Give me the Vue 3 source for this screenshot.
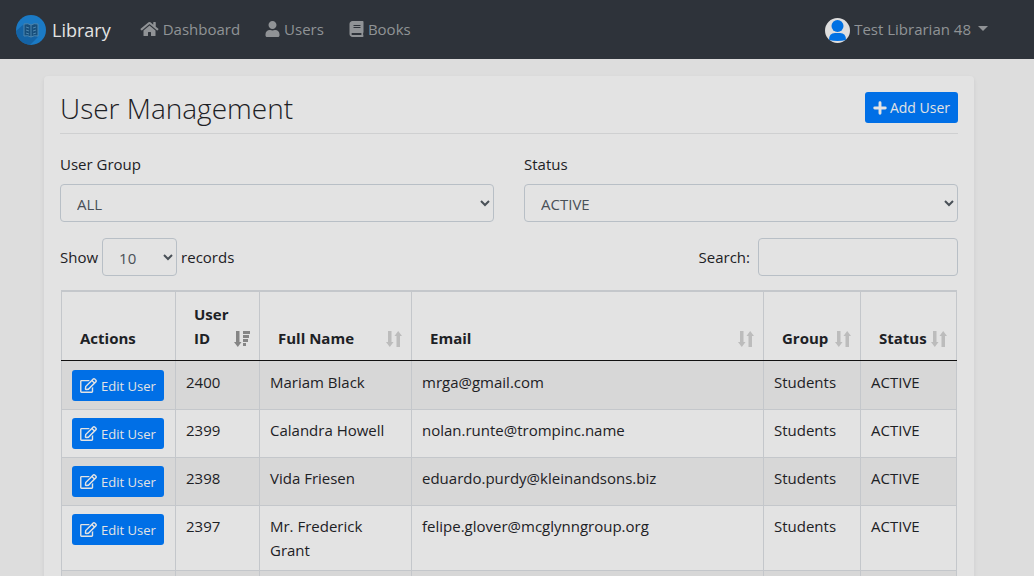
<script setup>
import { ref } from 'vue'

const group = ref('ALL')
const status = ref('ACTIVE')
const pageSize = ref('10')
const search = ref('')

const links = [
  {
    label: 'Dashboard', box: '0 0 576 512', wide: true,
    path: 'M280.4 148.3 96 300.1V464a16 16 0 0 0 16 16l112-.3a16 16 0 0 0 16-16V368a16 16 0 0 1 16-16h64a16 16 0 0 1 16 16v95.6a16 16 0 0 0 16 16.1L464 480a16 16 0 0 0 16-16V300L295.7 148.3a12.2 12.2 0 0 0-15.3 0zM571.6 251.5 488 182.6V44.1a12 12 0 0 0-12-12h-56a12 12 0 0 0-12 12v72.6L318.5 43a48 48 0 0 0-61 0L4.3 251.5a12 12 0 0 0-1.6 16.9l25.5 31a12 12 0 0 0 16.9 1.6l235.3-193.7a12.2 12.2 0 0 1 15.3 0L530.9 301a12 12 0 0 0 16.9-1.6l25.5-31a12 12 0 0 0-1.7-16.9z'
  },
  {
    label: 'Users', box: '0 0 448 512',
    path: 'M224 256c70.7 0 128-57.3 128-128S294.7 0 224 0 96 57.3 96 128s57.3 128 128 128zm89.6 32h-16.7c-22.2 10.2-46.9 16-72.9 16s-50.6-5.8-72.9-16h-16.7C60.2 288 0 348.2 0 422.4V464c0 26.5 21.5 48 48 48h352c26.5 0 48-21.5 48-48v-41.6c0-74.2-60.2-134.4-134.4-134.4z'
  },
  {
    label: 'Books', box: '0 0 448 512',
    path: 'M448 360V24c0-13.3-10.7-24-24-24H96C43 0 0 43 0 96v320c0 53 43 96 96 96h328c13.3 0 24-10.7 24-24v-16c0-7.5-3.5-14.3-8.9-18.7-4.2-15.4-4.2-59.3 0-74.7 5.4-4.3 8.9-11.1 8.9-18.6zM128 134c0-3.3 2.7-6 6-6h212c3.300 0 6 2.700 6 6v20c0 3.300-2.700 6-6 6H134c-3.300 0-6-2.700-6-6v-20zm0 64c0-3.300 2.700-6 6-6h212c3.300 0 6 2.700 6 6v20c0 3.300-2.700 6-6 6H134c-3.300 0-6-2.700-6-6v-20zm253.400 250H96c-17.700 0-32-14.300-32-32 0-17.600 14.400-32 32-32h285.400c-1.900 17.100-1.900 46.900 0 64z'
  }
]

const headers = [
  { label: 'Actions', sort: null },
  { label: 'User ID', sort: 'desc' },
  { label: 'Full Name', sort: 'none' },
  { label: 'Email', sort: 'none' },
  { label: 'Group', sort: 'none' },
  { label: 'Status', sort: 'none' }
]

const rows = [
  { id: 2400, name: 'Mariam Black', email: 'mrga@gmail.com' },
  { id: 2399, name: 'Calandra Howell', email: 'nolan.runte@trompinc.name' },
  { id: 2398, name: 'Vida Friesen', email: 'eduardo.purdy@kleinandsons.biz' },
  { id: 2397, name: 'Mr. Frederick Grant', email: 'felipe.glover@mcglynngroup.org' }
]
</script>

<template>
  <div class="page">
    <nav class="navbar">
      <a class="brand" href="#">
        <svg class="logo" viewBox="0 0 30 30" aria-hidden="true">
          <defs><clipPath id="disc"><circle cx="15" cy="15" r="15" /></clipPath></defs>
          <circle cx="15" cy="15" r="15" fill="#1b7ac4" />
          <path d="M0 16L8 9L22 22L14 30H8L0 22Z" fill="#135c9b" clip-path="url(#disc)" opacity=".75" />
          <path d="M8 9Q12 8 15 10Q18 8 22 9V21Q18 20 15 22Q12 20 8 21ZM15 10V22" fill="#174f7c" stroke="#4d86ae" stroke-width="1" />
          <path d="M10 12L13 13M10 15L13 16M10 18L13 19M20 12L17 13M20 15L17 16M20 18L17 19" stroke="#4d86ae" fill="none" />
        </svg>
        <span>Library</span>
      </a>
      <ul class="links">
        <li v-for="l in links" :key="l.label">
          <a href="#">
            <svg class="nav-icon" :class="{ wide: l.wide }" :viewBox="l.box" aria-hidden="true"><path :d="l.path" /></svg>
            <span>{{ l.label }}</span>
          </a>
        </li>
      </ul>
      <button class="account" type="button">
        <svg class="avatar" viewBox="0 0 25 25" aria-hidden="true">
          <circle cx="12.500" cy="12.500" r="12.500" fill="#dedede" />
          <circle cx="12.500" cy="8" r="6" fill="#0071e3" />
          <path d="M4 22Q4 15 10 15H15Q21 15 21 22Q17 23 12.500 23Q8 23 4 22Z" fill="#0071e3" />
        </svg>
        <span class="account-name">Test Librarian 48 <span class="caret"></span></span>
      </button>
    </nav>

    <main class="container">
      <section class="card">
        <header class="card-head">
          <h1>User Management</h1>
          <button class="btn add" type="button">
            <svg class="plus" viewBox="0 0 12 12" aria-hidden="true"><path d="M6 1.500V10.500M1.500 6H10.500" stroke="currentColor" stroke-width="2.500" stroke-linecap="round" /></svg>
            <span>Add User</span>
          </button>
        </header>

        <div class="filters">
          <div class="field">
            <label for="group">User Group</label>
            <select id="group" v-model="group"><option>ALL</option><option>Students</option></select>
          </div>
          <div class="field">
            <label for="status">Status</label>
            <select id="status" v-model="status"><option>ACTIVE</option><option>INACTIVE</option></select>
          </div>
        </div>

        <div class="tools">
          <label class="length">Show
            <select v-model="pageSize"><option>10</option><option>25</option><option>50</option></select>
            records
          </label>
          <label class="search">Search: <input v-model="search" type="search"></label>
        </div>

        <table>
          <colgroup>
            <col class="c-actions"><col class="c-id"><col class="c-name"><col class="c-email"><col class="c-group"><col class="c-status">
          </colgroup>
          <thead>
            <tr>
              <th v-for="h in headers" :key="h.label" scope="col">
                <div class="th">
                  <span>{{ h.label }}</span>
                  <svg v-if="h.sort" class="sort" :class="h.sort" viewBox="0 0 16 16" aria-hidden="true">
                    <path d="M2 0H5.500V11H7.500L3.800 16L0 11H2Z" />
                    <path v-if="h.sort === 'none'" d="M10.500 16H14V5H16L12.200 0L8.500 5H10.500Z" />
                    <path v-else d="M9 0H16V3H9ZM9 4H15V7H9ZM9 8H14V11H9ZM9 12H12V15H9Z" />
                  </svg>
                </div>
              </th>
            </tr>
          </thead>
          <tbody>
            <tr v-for="r in rows" :key="r.id">
              <td class="actions">
                <button class="btn" type="button">
                  <svg class="edit" viewBox="0 0 576 512" aria-hidden="true"><path d="M402.300 344.900l32-32c5-5 13.700-1.500 13.700 5.700V464c0 26.500-21.500 48-48 48H48c-26.500 0-48-21.500-48-48V112c0-26.500 21.500-48 48-48h273.500c7.100 0 10.700 8.600 5.700 13.700l-32 32c-1.500 1.500-3.500 2.300-5.700 2.300H48v352h352V350.500c0-2.100.8-4.100 2.300-5.600zm156.600-201.800L296.300 405.700l-90.400 10c-26.200 2.900-48.500-19.200-45.600-45.600l10-90.400L432.900 17.100c22.900-22.900 59.900-22.900 82.700 0l43.200 43.200c22.900 22.900 22.900 60 .1 82.800zM460.100 174L402 115.900 216.200 301.800l-7.300 65.300 65.300-7.300L460.100 174zm64.800-79.700l-43.200-43.200c-4.100-4.100-10.800-4.100-14.800 0L436 82l58.100 58.100 30.900-30.900c4-4.200 4-10.800-.1-14.900z" /></svg>
                  <span>Edit User</span>
                </button>
              </td>
              <td>{{ r.id }}</td>
              <td>{{ r.name }}</td>
              <td>{{ r.email }}</td>
              <td>Students</td>
              <td>ACTIVE</td>
            </tr>
            <tr><td></td><td></td><td></td><td></td><td></td><td></td></tr>
          </tbody>
        </table>
      </section>
    </main>
  </div>
</template>

<style>
html, body { background: #ddd; overflow: hidden; }
</style>

<style scoped>
* { box-sizing: border-box; }
.page {
  height: 100vh;
  overflow: hidden;
  font-family: "Open Sans", "Noto Sans", sans-serif;
  font-size: 15px;
  line-height: 24px;
  color: #1d2125;
}
button, select, input { font: inherit; }
.navbar {
  display: flex;
  align-items: center;
  height: 59px;
  padding: 0 46px 0 16px;
  background: #2e333a;
}
a { color: inherit; text-decoration: none; }
.brand { display: flex; align-items: center; gap: 6px; font-size: 18px; color: #e3e3e3; }
.logo { width: 30px; height: 30px; }
.links { display: flex; gap: 25px; margin: 0 0 0 29px; padding: 0 0 2px; list-style: none; color: #909396; }
.links a { display: flex; align-items: center; gap: 4px; }
.nav-icon { width: 15px; height: 16px; fill: currentColor; }
.nav-icon.wide { width: 19px; }
.account {
  display: flex;
  align-items: center;
  gap: 4px;
  margin-left: auto;
  padding: 2px 0 0;
  border: 0;
  background: none;
  color: #909396;
}
.avatar { width: 25px; height: 25px; }
.account-name { display: flex; align-items: center; gap: 7px; padding-bottom: 4px; }
.caret { border: 5px solid transparent; border-top-color: currentColor; border-bottom: 0; }
.container { width: calc(100% - 16px); max-width: 960px; margin-left: max(0px, calc((100% - 976px) / 2)); padding: 17px 15px 0; }
.card {
  padding: 16px;
  border-radius: 4px;
  background: #e3e3e3;
  box-shadow: 0 2px 4px rgba(0, 20, 40, .08);
}
.card-head {
  display: flex;
  align-items: flex-start;
  justify-content: space-between;
  padding-bottom: 8px;
  border-bottom: 1px solid #cfd0d1;
}
h1 { margin: 0; font-size: 28px; line-height: 33px; font-weight: 300; }
.btn {
  display: flex;
  align-items: center;
  justify-content: center;
  gap: 4px;
  height: 31px;
  padding: 0 8px;
  border: 0;
  border-radius: 3px;
  background: #006fe6;
  color: #e3e3e3;
  font-size: 13px;
  white-space: nowrap;
}
.btn.add { gap: 3px; font-size: 14px; }
.plus { width: 14px; height: 14px; }
.edit { width: 17px; height: 15px; fill: currentColor; }
.filters { display: grid; grid-template-columns: 1fr 1fr; gap: 30px; margin-top: 18px; }
.field label { display: block; margin-bottom: 8px; }
select, input {
  height: 38px;
  border: 1px solid #b8bfc6;
  border-radius: 4px;
  background-color: #e3e3e3;
  color: #495057;
  padding: 7px 12px 5px;
}
.field select { display: block; width: 100%; }
.tools { display: flex; justify-content: space-between; margin: 16px 0 14px; }
.length, .search { display: flex; align-items: center; }
.length { gap: 4px; }
.length select { width: 75px; }
.search { gap: 8px; }
.search input { width: 200px; }
table {
  width: calc(100% - 2px);
  margin: 0 1px;
  table-layout: fixed;
  border-collapse: collapse;
}
.c-actions { width: 114px; }
.c-id { width: 84px; }
.c-name { width: 152px; }
.c-group { width: 97px; }
.c-status { width: 96px; }
th, td { border: 1px solid #c4c7cb; text-align: left; }
th { padding: 10px 9px 10px 18px; border-top-width: 2px; border-bottom-color: #111; vertical-align: bottom; font-weight: 700; }
.th { display: flex; align-items: flex-end; justify-content: space-between; min-height: 48px; }
.sort { flex: none; width: 16px; height: 16px; margin-bottom: 3px; fill: #bcbcbc; }
.sort.desc { fill: #858585; }
td { height: 48px; padding: 8px 10px; vertical-align: top; }
tbody tr:first-child td { height: 49px; padding-top: 9px; }
td.actions .btn { width: 92px; }
tbody tr:nth-child(odd) { background: #d7d7d7; }
</style>
